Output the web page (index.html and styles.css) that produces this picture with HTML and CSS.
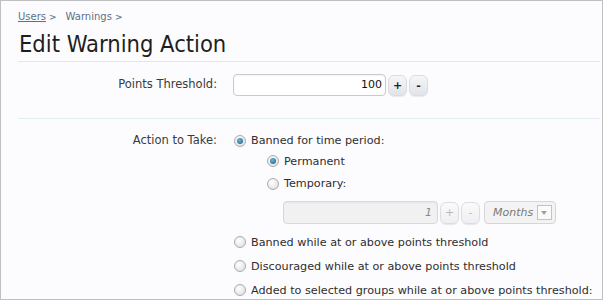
FILE: index.html
```html
<!DOCTYPE html>
<html>
<head>
<meta charset="utf-8">
<link rel="stylesheet" href="styles.css">
</head>
<body>
<div class="page">
  <nav class="crumbs">
    <a class="crumb current" href="#">Users</a><span class="sep">&gt;</span>
    <a class="crumb" href="#">Warnings</a><span class="sep">&gt;</span>
  </nav>
  <h1 class="title">Edit Warning Action</h1>

  <div class="row row-points">
    <div class="label">Points Threshold:</div>
    <div class="controls">
      <div class="spinbox">
        <span class="textbox">100</span>
        <span class="spin">+</span>
        <span class="spin">-</span>
      </div>
    </div>
  </div>

  <div class="row row-action">
    <div class="label">Action to Take:</div>
    <ul class="options">
      <li class="opt opt-top"><span class="radio checked"></span>Banned for time period:</li>
      <li>
        <ul class="sub">
          <li class="opt opt-perm"><span class="radio checked"></span>Permanent</li>
          <li class="opt opt-temp"><span class="radio"></span>Temporary:</li>
          <li class="sub-controls">
            <div class="spinbox disabled">
              <span class="textbox wide">1</span>
              <span class="spin">+</span>
              <span class="spin">-</span>
            </div>
            <span class="select">Months<span class="arrow"></span></span>
          </li>
        </ul>
      </li>
      <li class="opt"><span class="radio"></span>Banned while at or above points threshold</li>
      <li class="opt"><span class="radio"></span>Discouraged while at or above points threshold</li>
      <li class="opt"><span class="radio"></span>Added to selected groups while at or above points threshold:</li>
    </ul>
  </div>
</div>
</body>
</html>
```

FILE: styles.css
```css
html, body {
  margin: 0;
  padding: 0;
}
body {
  width: 603px;
  height: 300px;
  overflow: hidden;
  font-family: "DejaVu Sans", sans-serif;
  font-size: 11px;
  color: #333;
}
.page {
  box-sizing: border-box;
  width: 603px;
  height: 300px;
  border: 1px solid #c0c0c0;
  background: #fcfcfe;
  padding: 0 2px 0 17px;
  overflow: hidden;
}
.crumbs {
  padding-top: 9px;
  height: 14px;
  line-height: 14px;
  display: flex;
  align-items: center;
  font-size: 10px;
}
.crumb {
  color: #5b7188;
  text-decoration: none;
}
.crumb.current {
  text-decoration: underline;
}
.sep {
  color: #6f7f8f;
  font-size: 9px;
  font-weight: bold;
  margin: 0 9px 0 3px;
}
.title {
  margin: 0;
  padding: 7px 0 4px 1px;
  font-size: 23.5px;
  font-stretch: condensed;
  font-weight: normal;
  line-height: 26px;
  color: #1e1e1e;
  border-bottom: 1px solid #dfe9ec;
}
.row {
  display: flex;
  border-bottom: 1px solid #e1ecee;
}
.row-points {
  height: 44px;
  padding-top: 12px;
}
.row-action {
  padding-top: 11px;
  border-bottom: none;
}
.label {
  width: 199px;
  text-align: right;
  padding-right: 16px;
  line-height: 21px;
  font-size: 11.5px;
  color: #3a3a3a;
}
.spinbox {
  display: flex;
  align-items: center;
  gap: 2px;
}
.textbox {
  box-sizing: border-box;
  width: 153px;
  height: 22px;
  line-height: 20px;
  border: 1px solid #cacaca;
  border-radius: 4px;
  background: #fff;
  text-align: right;
  padding-right: 3px;
  color: #111;
  box-shadow: inset 0 1px 2px rgba(0,0,0,0.05);
}
.spin {
  box-sizing: border-box;
  width: 19px;
  height: 21px;
  line-height: 19px;
  text-align: center;
  border: 1px solid #dcdde2;
  border-radius: 6px;
  background: linear-gradient(#f6f6f8, #e2e3e8);
  color: #222;
  font-weight: bold;
  box-shadow: 0 1px 1px rgba(0,0,0,0.08);
}
.options, .sub {
  list-style: none;
  margin: 0;
  padding: 0;
}
.opt {
  display: flex;
  align-items: center;
  height: 24px;
  font-size: 11.2px;
  color: #2e2e2e;
}
.options > .opt-top {
  height: 21px;
}
.sub {
  padding-left: 33px;
}
.sub .opt-perm {
  height: 20px;
}
.sub .opt-temp {
  height: 25px;
}
.radio {
  box-sizing: border-box;
  width: 12px;
  height: 12px;
  border-radius: 50%;
  border: 1px solid #a9abae;
  background: radial-gradient(circle at 40% 35%, #ffffff, #d9dadd);
  margin: 0 5px 0 1px;
  flex: none;
  position: relative;
}
.radio.checked::after {
  content: "";
  position: absolute;
  left: 2px;
  top: 2px;
  width: 6px;
  height: 6px;
  border-radius: 50%;
  background: radial-gradient(circle at 40% 35%, #6fb5d6, #1b5a7a);
}
.sub-controls {
  display: flex;
  align-items: center;
  padding: 5px 0 6px 17px;
  gap: 4px;
}
.spinbox.disabled .textbox {
  width: 155px;
  height: 23px;
  background: #f1f1f2;
  border-color: #d8d8da;
  color: #888;
  font-style: italic;
  padding-right: 5px;
  line-height: 21px;
}
.spinbox.disabled .spin {
  color: #b8b8b8;
  font-weight: normal;
  background: linear-gradient(#fafafa, #efeff1);
  height: 22px;
}
.select {
  box-sizing: border-box;
  display: flex;
  align-items: center;
  width: 72px;
  height: 23px;
  padding: 0 3px 0 8px;
  border: 1px solid #d6d6d8;
  border-radius: 4px;
  background: #f3f3f4;
  color: #7a7a7a;
  font-style: italic;
  font-size: 11px;
}
.arrow {
  box-sizing: border-box;
  margin-left: auto;
  width: 15px;
  height: 15px;
  border: 1px solid #c3c3c6;
  background: #fafafa;
  position: relative;
}
.arrow::after {
  content: "";
  position: absolute;
  left: 3px;
  top: 5px;
  border-left: 3.5px solid transparent;
  border-right: 3.5px solid transparent;
  border-top: 4px solid #a0a0a4;
}
```
